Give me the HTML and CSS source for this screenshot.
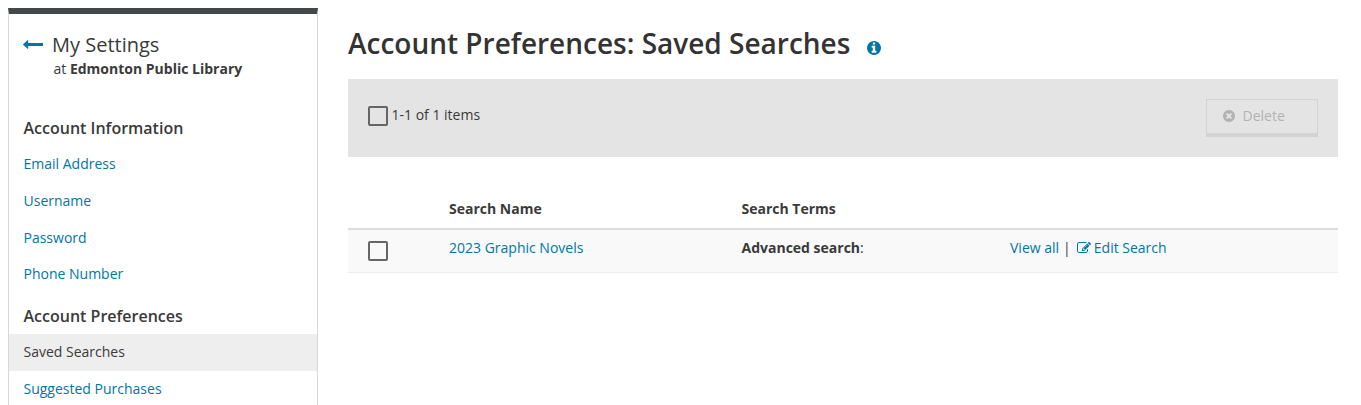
FILE: index.html
```html
<!DOCTYPE html>
<html lang="en">
<head>
  <meta charset="UTF-8" />
  <meta name="viewport" content="width=device-width, initial-scale=1.0"/>
  <title>Account Preferences: Saved Searches</title>
  <link rel="stylesheet" href="styles.css">
</head>
<body>
  <div class="page">
    <nav class="sidebar">
      <div class="sidebar-header">
        <a href="#" class="back-link" aria-label="Back">
          <svg class="icon-back" viewBox="64 512 1728 768"><path d="M1792 800v192q0 14-9 23t-23 9h-1248v224q0 21-19 29t-35-5l-384-350q-10-10-10-23 0-14 10-24l384-354q16-14 35-6 19 9 19 29v224h1248q14 0 23 9t9 23z"/></svg>
        </a>
        <div>
          <div class="sidebar-title">My Settings</div>
          <div class="library">at <b>Edmonton Public Library</b></div>
        </div>
      </div>

      <h2 class="nav-heading">Account Information</h2>
      <ul class="nav-list">
        <li><a href="#">Email Address</a></li>
        <li><a href="#">Username</a></li>
        <li><a href="#">Password</a></li>
        <li><a href="#">Phone Number</a></li>
      </ul>
      <h2 class="nav-heading">Account Preferences</h2>
      <ul class="nav-list">
        <li class="active"><a href="#">Saved Searches</a></li>
        <li><a href="#">Suggested Purchases</a></li>
      </ul>
    </nav>

    <main class="content">
      <div class="title-row">
        <h1>Account Preferences: Saved Searches</h1>
        <svg class="icon-info" viewBox="128 128 1536 1536"><path d="M1152 1376v-160q0-14-9-23t-23-9h-96v-512q0-14-9-23t-23-9h-320q-14 0-23 9t-9 23v160q0 14 9 23t23 9h96v320h-96q-14 0-23 9t-9 23v160q0 14 9 23t23 9h448q14 0 23-9t9-23zm-128-896v-160q0-14-9-23t-23-9h-192q-14 0-23 9t-9 23v160q0 14 9 23t23 9h192q14 0 23-9t9-23zm640 416q0 209-103 385.5t-279.5 279.5-385.5 103-385.5-103-279.5-279.5-103-385.5 103-385.5 279.5-279.5 385.5-103 385.5 103 279.5 279.5 103 385.5z"/></svg>
      </div>

      <div class="toolbar">
        <label class="select-all">
          <input type="checkbox" class="checkbox" />
          <span>1-1 of 1 items</span>
        </label>
        <button class="delete-button" disabled>
          <svg class="icon-delete" viewBox="128 128 1536 1536"><path d="M1277 1122q0-26-19-45l-181-181 181-181q19-19 19-45 0-27-19-46l-90-90q-19-19-46-19-26 0-45 19l-181 181-181-181q-19-19-45-19-27 0-46 19l-90 90q-19 19-19 46 0 26 19 45l181 181-181 181q-19 19-19 45 0 27 19 46l90 90q19 19 46 19 26 0 45-19l181-181 181 181q19 19 45 19 27 0 46-19l90-90q19-19 19-46zm387-226q0 209-103 385.5t-279.5 279.5-385.5 103-385.5-103-279.5-279.5-103-385.5 103-385.5 279.5-279.5 385.5-103 385.5 103 279.5 279.5 103 385.5z"/></svg>
          Delete
        </button>
      </div>

      <div class="search-table">
        <div class="table-row table-head">
          <div></div>
          <div>Search Name</div>
          <div>Search Terms</div>
          <div></div>
        </div>
        <div class="table-row table-item">
          <div><input type="checkbox" class="checkbox" /></div>
          <div><a href="#">2023 Graphic Novels</a></div>
          <div><b>Advanced search</b>:</div>
          <div class="actions">
            <a href="#">View all</a>
            <span class="divider">|</span>
            <a href="#" class="edit-link">
              <svg class="icon-edit" viewBox="0 0 1792 1792"><path d="M888 1184l116-116-152-152-116 116v56h96v96h56zm440-720q-16-16-33 1l-350 350q-17 17-1 33t33-1l350-350q17-17 1-33zm80 594v190q0 119-84.5 203.5t-203.5 84.5h-832q-119 0-203.5-84.5t-84.5-203.5v-832q0-119 84.5-203.5t203.5-84.5h832q63 0 117 25 15 7 18 23 3 17-9 29l-49 49q-14 14-32 8-23-6-45-6h-832q-66 0-113 47t-47 113v832q0 66 47 113t113 47h832q66 0 113-47t47-113v-126q0-13 9-22l64-64q15-15 35-7t20 29zm-96-738l288 288-672 672h-288v-288zm444 132l-92 92-288-288 92-92q28-28 68-28t68 28l152 152q28 28 28 68t-28 68z"/></svg>
              Edit Search
            </a>
          </div>
        </div>
      </div>
    </main>
  </div>
</body>
</html>
```
FILE: styles.css
```css
* {
  margin: 0;
  padding: 0;
  box-sizing: border-box;
}
body {
  background: #ffffff;
  color: #3a3a3a;
  font-family: 'Open Sans', sans-serif;
  font-size: 14px;
  line-height: 20px;
  height: 100vh;
  overflow: hidden;
}
a {
  color: #0076a3;
  text-decoration: none;
}
a:hover {
  text-decoration: underline;
}
b {
  font-weight: 700;
}
svg {
  display: block;
  fill: currentColor;
  flex-shrink: 0;
}
.page {
  display: flex;
  gap: 30px;
  height: 100vh;
  padding: 8px 23px 0 8px;
}

/* sidebar */
.sidebar {
  width: 310px;
  flex-shrink: 0;
  border: 1px solid #d8d8d8;
  border-top: 6px solid #43484d;
  border-bottom: none;
}
.sidebar-header {
  display: flex;
  gap: 9px;
  padding: 18px 14px 32px;
}
.back-link {
  padding-top: 8px;
}
.icon-back {
  width: 20px;
  height: 9px;
}
.sidebar-title {
  font-size: 20px;
  line-height: 26px;
}
.library {
  padding-left: 1.5px;
  line-height: 21px;
}
.nav-heading {
  padding: 6px 14.5px 0;
  height: 35.3px;
  font-size: 16px;
  font-weight: 600;
  line-height: 22px;
}
.nav-list {
  list-style: none;
}
.nav-list + .nav-heading {
  padding-top: 12px;
  height: 41px;
}
.nav-list a {
  display: block;
  padding: 0 14.5px;
  line-height: 36.67px;
}
.nav-list .active {
  background: #eeeeee;
}
.nav-list .active a {
  color: #3a3a3a;
}

/* main column */
.content {
  flex: 1;
}
.title-row {
  display: flex;
  align-items: center;
  gap: 16.5px;
  height: 71px;
}
.title-row h1 {
  margin-top: -2px;
  color: #333333;
  font-size: 28px;
  font-weight: 600;
  line-height: 38px;
}
.icon-info {
  width: 14px;
  height: 14px;
  margin-top: 8px;
  color: #0076a3;
}
.toolbar {
  display: flex;
  justify-content: space-between;
  align-items: flex-start;
  height: 78px;
  padding: 20px;
  background: #e4e4e4;
}
.select-all {
  display: flex;
  gap: 3.5px;
  padding-top: 6px;
}
.checkbox {
  display: block;
  appearance: none;
  width: 20px;
  height: 20px;
  border: 2px solid #666666;
  border-radius: 2px;
  background: transparent;
}
.select-all .checkbox {
  margin-top: 1px;
}
.delete-button {
  display: flex;
  align-items: center;
  gap: 7.5px;
  width: 112px;
  height: 38px;
  padding: 0 0 2px 16px;
  border: 1px solid #d3d3d3;
  border-bottom-width: 4px;
  background: #e4e4e4;
  color: #b2b2b2;
  font-family: inherit;
  font-size: 14px;
}
.icon-delete {
  width: 12px;
  height: 12px;
}

/* saved searches */
.search-table {
  margin-top: 32px;
}
.table-row {
  display: grid;
  grid-template-columns: 81px 292.5px 268.5px 1fr;
  padding-left: 20px;
}
.table-head {
  height: 41px;
  padding-top: 10px;
  border-bottom: 2px solid #dddddd;
  font-weight: 700;
}
.table-item {
  height: 43px;
  padding-top: 8px;
  background: #f9f9f9;
  border-bottom: 1px solid #eeeeee;
}
.table-item .checkbox {
  margin-top: 3px;
}
.actions {
  display: flex;
  align-items: flex-start;
}
.divider {
  margin: 0 6px 0 4px;
}
.edit-link {
  display: flex;
  align-items: center;
  gap: 3px;
}
.icon-edit {
  width: 14px;
  height: 14px;
}
```
